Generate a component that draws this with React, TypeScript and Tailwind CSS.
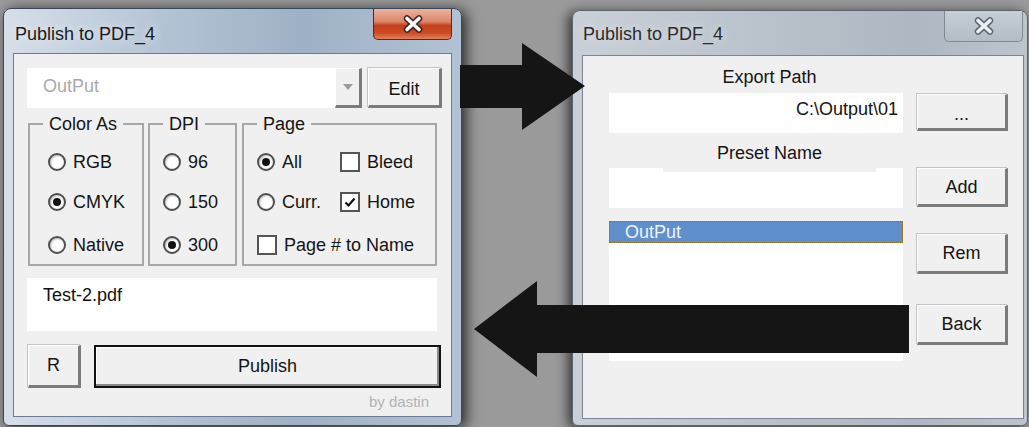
import type { ReactNode } from 'react'

const font = { fontFamily: '"Liberation Sans", Arial, sans-serif' }

function Radio({ label, checked }: { label: string; checked?: boolean }) {
  return (
    <div className="flex h-[22px] items-center gap-[7px]">
      <span className="flex h-[18px] w-[18px] items-center justify-center rounded-full border-2 border-[#4f4f4f] bg-white shadow-[inset_1px_1px_2px_rgba(0,0,0,0.25)]">
        {checked && <span className="h-[8px] w-[8px] rounded-full bg-[#111]" />}
      </span>
      <span>{label}</span>
    </div>
  )
}

function Check({ label, checked }: { label: string; checked?: boolean }) {
  return (
    <div className="flex h-[22px] items-center gap-[7px]">
      <span className="flex h-[20px] w-[20px] items-center justify-center border-2 border-[#555] bg-white">
        {checked && (
          <svg width="12" height="11" viewBox="0 0 12 11">
            <path d="M1.5 5.5 L4.5 8.5 L10.5 1.5" fill="none" stroke="#111" strokeWidth="2.2" />
          </svg>
        )}
      </span>
      <span>{label}</span>
    </div>
  )
}

function WinButton({ children, className = '' }: { children?: ReactNode; className?: string }) {
  return (
    <div
      className={`flex items-center justify-center border border-t-white border-l-white border-r-[3px] border-b-[3px] border-r-[#7b7b7b] border-b-[#7b7b7b] bg-[#f0f0f0] shadow-[-1px_-1px_0_#c4c4c4] ${className}`}
    >
      {children}
    </div>
  )
}

function Group({ title, className = '', children }: { title: string; className?: string; children: ReactNode }) {
  return (
    <fieldset className={`h-[153px] border-2 border-[#a7a7a7] ${className}`}>
      <legend className="ml-[13px] px-[6px] leading-[22px]">{title}</legend>
      {children}
    </fieldset>
  )
}

function CloseX({ dim }: { dim?: boolean }) {
  const d = 'M5 3.5 L17 14.5 M17 3.5 L5 14.5'
  return (
    <svg width="22" height="18" viewBox="0 0 22 18">
      <path d={d} stroke={dim ? '#5d6670' : '#3b2520'} strokeWidth="6.5" strokeLinecap="round" />
      <path d={d} stroke={dim ? '#eef1f4' : '#ffffff'} strokeWidth="3.6" strokeLinecap="round" />
    </svg>
  )
}

function MainWindow() {
  return (
    <div className="absolute left-[3px] top-[8px] flex h-[418px] w-[459px] flex-col rounded-t-[8px] rounded-b-[6px] border border-[#38475a] bg-[linear-gradient(90deg,#d6dfe9_0%,#b4c3d4_35%,#9fb1c6_65%,#b2c2d4_100%)] shadow-[4px_2px_14px_rgba(0,0,0,0.75)]">
      <div className="flex h-[44px] shrink-0 items-start justify-between">
        <div className="pl-[11px] pt-[12px] text-[18px] text-[#1a1a1a] [text-shadow:0_0_8px_#eef3f8]">Publish to PDF_4</div>
        <div className="mr-[9px] flex h-[31px] w-[79px] items-center justify-center rounded-b-[5px] border border-t-0 border-[#5e2518] bg-[linear-gradient(180deg,#eab3a0_0%,#dc866a_42%,#c3401d_55%,#cd4a24_80%,#e2825c_100%)]">
          <CloseX />
        </div>
      </div>
      <div className="mx-[9px] flex h-[364px] flex-col border border-[#6a7c91] bg-[#f0f0f0] pl-[13px] pt-[14px]">
        <div className="flex h-[40px]">
          <div className="w-[308px] bg-white pl-[16px] pt-[5px] text-[#a9a9a9]">OutPut</div>
          <WinButton className="w-[27px] shadow-none">
            <svg width="10" height="6" viewBox="0 0 10 6">
              <path d="M0 0 H10 L5 6 Z" fill="#9a9a9a" />
            </svg>
          </WinButton>
          <WinButton className="ml-[6px] w-[74px] pt-[5px]">Edit</WinButton>
        </div>
        <div className="mt-[5px] flex">
          <Group title="Color As" className="ml-[1px] w-[116px]">
            <div className="flex flex-col pl-[18px] pt-[16px]">
              <Radio label="RGB" />
              <div className="mt-[18px]">
                <Radio label="CMYK" checked />
              </div>
              <div className="mt-[21px]">
                <Radio label="Native" />
              </div>
            </div>
          </Group>
          <Group title="DPI" className="ml-[4px] w-[89px]">
            <div className="flex flex-col pl-[13px] pt-[16px]">
              <Radio label="96" />
              <div className="mt-[18px]">
                <Radio label="150" />
              </div>
              <div className="mt-[21px]">
                <Radio label="300" checked />
              </div>
            </div>
          </Group>
          <Group title="Page" className="ml-[5px] w-[195px]">
            <div className="flex flex-col pl-[13px] pt-[16px]">
              <div className="flex">
                <div className="w-[83px]">
                  <Radio label="All" checked />
                </div>
                <Check label="Bleed" />
              </div>
              <div className="mt-[18px] flex">
                <div className="w-[83px]">
                  <Radio label="Curr." />
                </div>
                <Check label="Home" checked />
              </div>
              <div className="mt-[21px]">
                <Check label="Page # to Name" />
              </div>
            </div>
          </Group>
        </div>
        <div className="mt-[12px] h-[53px] w-[410px] bg-white pl-[16px] pt-[4px] text-[#111]">Test-2.pdf</div>
        <div className="mt-[14px] flex h-[43px]">
          <WinButton className="ml-[1px] w-[53px]">R</WinButton>
          <div className="ml-[13px] flex w-[347px] items-center justify-center border-2 border-[#111] bg-[#f0f0f0] shadow-[inset_-2px_-2px_0_#8a8a8a,inset_1px_1px_0_#ffffff]">
            Publish
          </div>
        </div>
        <div className="mt-[3px] pr-[22px] text-right text-[15px] text-[#b3b3b3]">by dastin</div>
      </div>
    </div>
  )
}

function PresetWindow() {
  return (
    <div className="absolute left-[572px] top-[10px] flex h-[416px] w-[456px] flex-col rounded-t-[8px] rounded-b-[6px] border border-[#5b6570] bg-[linear-gradient(90deg,#c9d0d7_0%,#b8c1ca_45%,#aeb8c2_75%,#bcc4cc_100%)] shadow-[-4px_2px_12px_rgba(0,0,0,0.65)]">
      <div className="flex h-[44px] shrink-0 items-start justify-between">
        <div className="pl-[10px] pt-[10px] text-[18px] text-[#2b2b2b] [text-shadow:0_0_8px_#e6eaee]">Publish to PDF_4</div>
        <div className="mr-[4px] flex h-[31px] w-[79px] items-center justify-center rounded-b-[5px] border border-t-0 border-[#7f8993] bg-[linear-gradient(180deg,#c7ced6,#b3bcc6)]">
          <CloseX dim />
        </div>
      </div>
      <div className="ml-[9px] mr-[3px] flex h-[364px] border border-[#7a8591] bg-[#f0f0f0] pl-[26px]">
        <div className="flex w-[294px] flex-col">
          <div className="ml-[54px] h-[37px] w-[213px] pt-[8px] text-center">Export Path</div>
          <div className="h-[40px] bg-white pr-[5px] pt-[3px] text-right">C:\Output\01</div>
          <div className="relative z-10 -mb-[4px] ml-[54px] h-[39px] w-[213px] bg-[#f0f0f0] pt-[7px] text-center">Preset Name</div>
          <div className="h-[40px] bg-white" />
          <div className="mt-[13px] h-[140px] bg-white">
            <div className="h-[22px] border border-dotted border-[#9a6a1a] bg-[#5f90cb] pl-[15px] leading-[20px] text-[#eef3fa]">OutPut</div>
          </div>
        </div>
        <div className="ml-[14px] flex w-[91px] flex-col">
          <WinButton className="mt-[38px] h-[37px] pt-[6px]">...</WinButton>
          <WinButton className="mt-[37px] h-[39px] pt-[2px]">Add</WinButton>
          <WinButton className="mt-[27px] h-[40px]">Rem</WinButton>
          <WinButton className="mt-[31px] h-[40px]">Back</WinButton>
        </div>
      </div>
    </div>
  )
}

export default function App() {
  return (
    <div className="relative h-[427px] w-[1029px] overflow-hidden bg-[#9a9a9a] text-[18px] text-[#141414]" style={font}>
      <PresetWindow />
      <MainWindow />
      <svg className="pointer-events-none absolute left-0 top-0" width="1029" height="427" viewBox="0 0 1029 427">
        <polygon points="460,65 522,65 522,43 585,86 522,130 522,108 460,108" fill="#151515" />
        <polygon points="909,305 537,305 537,281 474,329 537,377 537,353 909,353" fill="#151515" />
      </svg>
    </div>
  )
}
